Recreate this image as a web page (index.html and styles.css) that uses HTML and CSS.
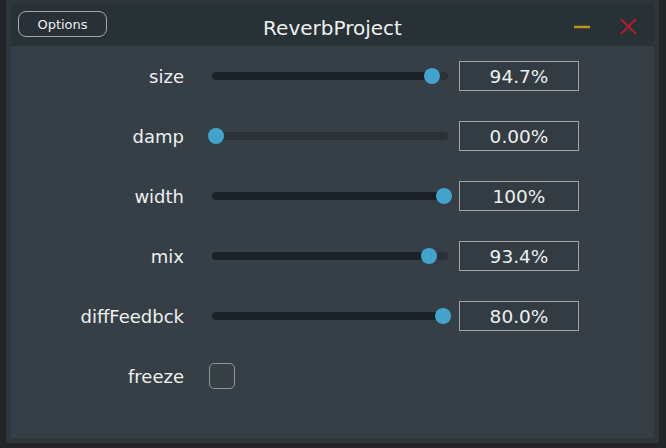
FILE: index.html
```html
<!DOCTYPE html>
<html>
<head>
<meta charset="utf-8">
<link rel="stylesheet" href="styles.css">
</head>
<body>
<div class="window">
  <div class="titlebar">
    <div class="tb-left"><button class="options">Options</button></div>
    <div class="title">ReverbProject</div>
    <div class="tb-right">
      <svg class="icon-min" width="16" height="16" viewBox="0 0 16 16"><line x1="0" y1="8" x2="16" y2="8" stroke="#b8951f" stroke-width="2.5"/></svg>
      <svg class="icon-close" width="17" height="17" viewBox="0 0 17 17"><path d="M1 1 L16 16 M16 1 L1 16" stroke="#b0202b" stroke-width="2" fill="none"/></svg>
    </div>
  </div>
  <div class="content">
    <div class="row">
      <div class="label">size</div>
      <div class="slider"><div class="track"><div class="fill" style="width:220px"></div></div><div class="thumb" style="left:215px"></div></div>
      <div class="value">94.7%</div>
    </div>
    <div class="row">
      <div class="label">damp</div>
      <div class="slider"><div class="track"><div class="fill" style="width:4px"></div></div><div class="thumb" style="left:-1px"></div></div>
      <div class="value">0.00%</div>
    </div>
    <div class="row">
      <div class="label">width</div>
      <div class="slider"><div class="track"><div class="fill" style="width:232px"></div></div><div class="thumb" style="left:227px"></div></div>
      <div class="value">100%</div>
    </div>
    <div class="row">
      <div class="label">mix</div>
      <div class="slider"><div class="track"><div class="fill" style="width:217px"></div></div><div class="thumb" style="left:212px"></div></div>
      <div class="value">93.4%</div>
    </div>
    <div class="row">
      <div class="label">diffFeedbck</div>
      <div class="slider"><div class="track"><div class="fill" style="width:231px"></div></div><div class="thumb" style="left:226px"></div></div>
      <div class="value">80.0%</div>
    </div>
    <div class="row">
      <div class="label">freeze</div>
      <div class="checkcell"><div class="checkbox"></div></div>
    </div>
  </div>
</div>
</body>
</html>
```
FILE: styles.css
```css
html, body {
  margin: 0;
  padding: 0;
  background: #232529;
  width: 666px;
  height: 448px;
  overflow: hidden;
}
body {
  font-family: "DejaVu Sans", Verdana, sans-serif;
  color: #eef0f0;
}
.window {
  box-sizing: border-box;
  margin-left: 6px;
  width: 653px;
  height: 443px;
  border: 5px solid #2e363b;
  border-top-width: 4px;
  background: #353f45;
  display: flex;
  flex-direction: column;
}
.titlebar {
  height: 42px;
  background: #283136;
  display: grid;
  grid-template-columns: 1fr auto 1fr;
  align-items: center;
}
.tb-left {
  padding-left: 7px;
  padding-bottom: 2px;
}
.options {
  box-sizing: border-box;
  width: 89px;
  height: 26px;
  border: 1.5px solid #a3a9ab;
  border-radius: 8px;
  background: #283136;
  color: #eef0f0;
  font-family: "DejaVu Sans", Verdana, sans-serif;
  font-size: 13px;
  padding: 0;
  display: block;
}
.title {
  font-size: 20px;
  padding-top: 6px;
  letter-spacing: 0;
}
.tb-right {
  display: flex;
  justify-content: flex-end;
  align-items: center;
  padding-right: 17px;
  padding-top: 3px;
  gap: 30px;
}
.icon-min, .icon-close {
  display: block;
}
.content {
  display: flex;
  flex-direction: column;
}
.row {
  height: 60px;
  display: grid;
  grid-template-columns: 173px 242px 120px;
  column-gap: 0;
  align-items: center;
}
.label {
  text-align: right;
  font-size: 18px;
  padding-top: 1px;
}
.slider {
  position: relative;
  height: 16px;
  margin-left: 25px;
  width: 242px;
  display: flex;
  align-items: center;
}
.track {
  margin-left: 3px;
  width: 236px;
  height: 8px;
  border-radius: 4px;
  background: #2a3238;
  overflow: hidden;
}
.fill {
  height: 100%;
  background: #1b2124;
  border-radius: 4px;
}
.thumb {
  position: absolute;
  top: 0;
  width: 16px;
  height: 16px;
  border-radius: 50%;
  background: #42a4cd;
}
.value {
  box-sizing: border-box;
  margin-left: 33px;
  width: 120px;
  height: 30px;
  border: 1.5px solid #9ea6a9;
  background: #323c42;
  font-size: 18.5px;
  display: flex;
  align-items: center;
  justify-content: center;
  padding-top: 1px;
}
.checkcell {
  margin-left: 25px;
}
.checkbox {
  box-sizing: border-box;
  width: 26px;
  height: 26px;
  border: 1.5px solid #8f979a;
  border-radius: 5px;
}
```
